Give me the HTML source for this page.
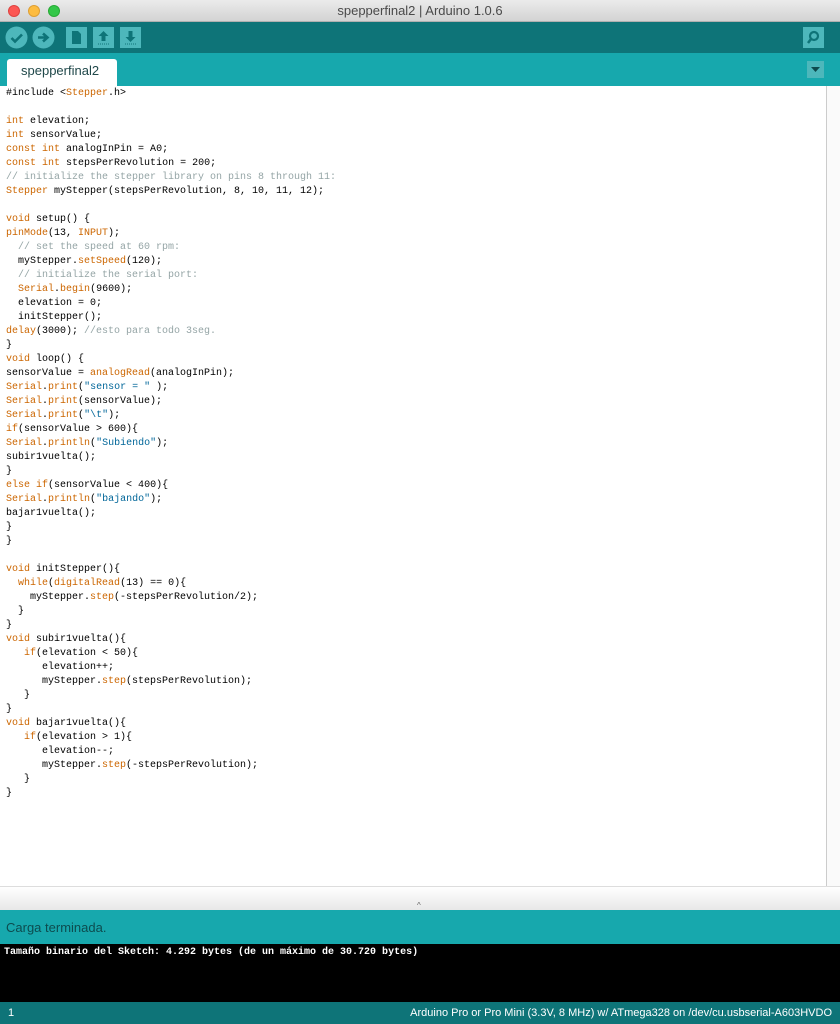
<!DOCTYPE html>
<html><head><meta charset="utf-8"><style>
*{margin:0;padding:0;box-sizing:border-box}
body{width:840px;height:1024px;overflow:hidden;background:#fff;font-family:"Liberation Sans",sans-serif;position:relative}
.title{position:absolute;top:0;left:0;width:840px;height:22px;background:linear-gradient(#ebebeb,#d3d3d3);border-bottom:1px solid #b0b0b0;text-align:center;font-size:13px;line-height:21px;color:#4a4a4a}
.dot{position:absolute;top:5px;width:12px;height:12px;border-radius:50%}
.tb{position:absolute;top:22px;left:0;width:840px;height:31px;background:#0e7478}
.tabs{position:absolute;top:53px;left:0;width:840px;height:33px;background:#17a8ad}
.tab{position:absolute;left:7px;top:6px;width:110px;height:27px;background:#fff;border-radius:3px 3px 0 0;font-size:13px;color:#20484a;padding:4px 0 0 14px}
.ed{position:absolute;top:86px;left:0;width:826px;height:800px;background:#fff;font-family:"Liberation Mono",monospace;font-size:10px;line-height:14px;padding:1px 0 0 6px;white-space:pre;color:#000}
.sb{position:absolute;top:86px;left:826px;width:14px;height:800px;background:#fafafa;border-left:1px solid #ccc}
.k{color:#cc6600}.c{color:#95a5a6}.s{color:#006699}
.div{position:absolute;top:886px;left:0;width:840px;height:24px;background:linear-gradient(#fff,#e8e8e8);border-top:1px solid #ddd}
.st{position:absolute;top:910px;left:0;width:840px;height:34px;background:#17a8ad;color:#0d4c4f;font-size:13px;padding:10px 0 0 6px}
.con{position:absolute;top:944px;left:0;width:840px;height:58px;background:#000;color:#fff;font-family:"Liberation Mono",monospace;font-size:10px;font-weight:bold;padding:3px 0 0 4px}
.bot{position:absolute;top:1002px;left:0;width:840px;height:22px;background:#0e7478;color:#fff;font-size:11px;line-height:22px;padding:0 8px}
</style></head><body>
<div class="title">spepperfinal2 | Arduino 1.0.6
<div class="dot" style="left:8px;background:#fc5753;border:1px solid #de4340"></div>
<div class="dot" style="left:28px;background:#fdbc40;border:1px solid #de9f34"></div>
<div class="dot" style="left:48px;background:#33c748;border:1px solid #27aa35"></div>
</div>
<div class="tb">
<svg style="position:absolute;left:5px;top:4px" width="23" height="23"><circle cx="11.5" cy="11.5" r="11" fill="#4db7bb"/><path d="M6.5 12l3.5 3.5 7-7" stroke="#0e7478" stroke-width="2.6" fill="none"/></svg>
<svg style="position:absolute;left:32px;top:4px" width="23" height="23"><circle cx="11.5" cy="11.5" r="11" fill="#4db7bb"/><path d="M6 11.5h8M11 7.5l4.5 4-4.5 4" stroke="#0e7478" stroke-width="2.6" fill="none"/></svg>
<svg style="position:absolute;left:66px;top:5px" width="21" height="21"><rect width="21" height="21" fill="#4db7bb"/><path d="M6 4h6l3 3v10H6z" fill="#0e7478"/></svg>
<svg style="position:absolute;left:93px;top:5px" width="21" height="21"><rect width="21" height="21" fill="#4db7bb"/><path d="M10.5 4l-5 5h3v5h4V9h3z" fill="#0e7478"/><path d="M5 17h11" stroke="#0e7478" stroke-dasharray="1 1"/></svg>
<svg style="position:absolute;left:120px;top:5px" width="21" height="21"><rect width="21" height="21" fill="#4db7bb"/><path d="M10.5 15l-5-5h3V4h4v6h3z" fill="#0e7478"/><path d="M5 17h11" stroke="#0e7478" stroke-dasharray="1 1"/></svg>
<svg style="position:absolute;left:803px;top:5px" width="21" height="21"><rect width="21" height="21" fill="#4db7bb"/><circle cx="11" cy="9" r="4" stroke="#0e7478" stroke-width="2.2" fill="none"/><path d="M8 12l-3 4" stroke="#0e7478" stroke-width="2.5"/></svg>
</div>
<div class="tabs"><div class="tab">spepperfinal2</div>
<svg style="position:absolute;left:807px;top:8px" width="17" height="17"><rect width="17" height="17" fill="#4db7bb"/><path d="M4 6h9l-4.5 5z" fill="#0e4a4d"/></svg></div>
<div class="ed">#include &lt;<span class="k">Stepper</span>.h&gt;

<span class="k">int</span> elevation;
<span class="k">int</span> sensorValue;
<span class="k">const</span> <span class="k">int</span> analogInPin = A0;
<span class="k">const</span> <span class="k">int</span> stepsPerRevolution = 200;
<span class="c">// initialize the stepper library on pins 8 through 11:</span>
<span class="k">Stepper</span> myStepper(stepsPerRevolution, 8, 10, 11, 12);

<span class="k">void</span> setup() {
<span class="k">pinMode</span>(13, <span class="k">INPUT</span>);
  <span class="c">// set the speed at 60 rpm:</span>
  myStepper.<span class="k">setSpeed</span>(120);
  <span class="c">// initialize the serial port:</span>
  <span class="k">Serial</span>.<span class="k">begin</span>(9600);
  elevation = 0;
  initStepper();
<span class="k">delay</span>(3000); <span class="c">//esto para todo 3seg.</span>
}
<span class="k">void</span> loop() {
sensorValue = <span class="k">analogRead</span>(analogInPin);
<span class="k">Serial</span>.<span class="k">print</span>(<span class="s">"sensor = "</span> );
<span class="k">Serial</span>.<span class="k">print</span>(sensorValue);
<span class="k">Serial</span>.<span class="k">print</span>(<span class="s">"\t"</span>);
<span class="k">if</span>(sensorValue &gt; 600){
<span class="k">Serial</span>.<span class="k">println</span>(<span class="s">"Subiendo"</span>);
subir1vuelta();
}
<span class="k">else</span> <span class="k">if</span>(sensorValue &lt; 400){
<span class="k">Serial</span>.<span class="k">println</span>(<span class="s">"bajando"</span>);
bajar1vuelta();
}
}

<span class="k">void</span> initStepper(){
  <span class="k">while</span>(<span class="k">digitalRead</span>(13) == 0){
    myStepper.<span class="k">step</span>(-stepsPerRevolution/2);
  }
}
<span class="k">void</span> subir1vuelta(){
   <span class="k">if</span>(elevation &lt; 50){
      elevation++;
      myStepper.<span class="k">step</span>(stepsPerRevolution);
   }
}
<span class="k">void</span> bajar1vuelta(){
   <span class="k">if</span>(elevation &gt; 1){
      elevation--;
      myStepper.<span class="k">step</span>(-stepsPerRevolution);
   }
}</div>
<div class="sb"></div>
<div class="div"><div style="position:absolute;left:417px;top:14px;font-size:8px;color:#666">^</div></div>
<div class="st">Carga terminada.</div>
<div class="con">Tamaño binario del Sketch: 4.292 bytes (de un máximo de 30.720 bytes)</div>
<div class="bot">1<span style="float:right">Arduino Pro or Pro Mini (3.3V, 8 MHz) w/ ATmega328 on /dev/cu.usbserial-A603HVDO</span></div>
</body></html>
